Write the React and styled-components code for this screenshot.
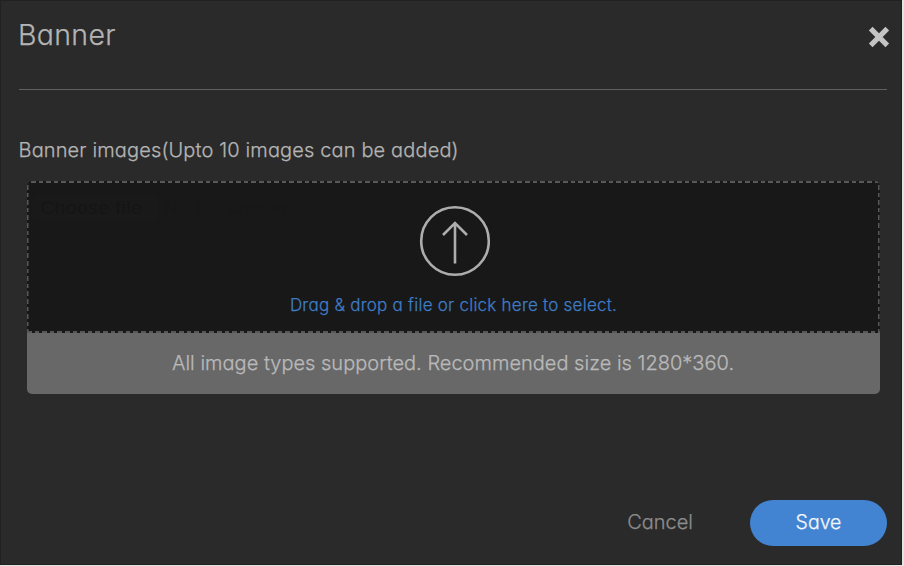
import React from "react";
import styled, { createGlobalStyle } from "styled-components";

const GlobalStyle = createGlobalStyle`
  * { box-sizing: border-box; }
  body {
    margin: 0;
    background: #e4e4e4;
    font-family: Inter, Lato, "Open Sans", sans-serif;
    font-feature-settings: "cv11", "ss03";
    font-weight: 300;
    -webkit-text-stroke: 0.25px currentColor;
  }
`;

const Modal = styled.main`
  width: 902px;
  height: 565px;
  padding: 0 14px 18px 18px;
  display: flex;
  flex-direction: column;
  background: #2a2a2a;
  border: 1px solid #212121;
  overflow: hidden;
`;

const Header = styled.header`
  height: 89px;
  flex: none;
  display: flex;
  justify-content: space-between;
  border-bottom: 1px solid #606060;
`;

const Title = styled.h1`
  margin: 16px 0 0 -1px;
  font-size: 28.5px;
  line-height: 36px;
  font-weight: 300;
  letter-spacing: 0.3px;
  color: #b4b4b4;
`;

const CloseButton = styled.button`
  width: 22px;
  height: 22px;
  margin: 25px -3px 0 0;
  padding: 0;
  border: 0;
  background: none;
  color: #c4c4c4;
  svg { display: block; }
`;

const Label = styled.label`
  margin: 47px 0 0 -0.5px;
  font-size: 20px;
  line-height: 26px;
  letter-spacing: 0.14px;
  white-space: nowrap;
  color: #b4b4b4;
`;

const Uploader = styled.section`
  width: 853px;
  margin: 18px 0 0 7.5px;
  border-radius: 5px;
  overflow: hidden;
`;

const dashesX = "repeating-linear-gradient(90deg, #585858 0 4.6px, transparent 4.6px 7.6px)";
const dashesY = "repeating-linear-gradient(180deg, #585858 0 4.6px, transparent 4.6px 7.6px)";

const DropZone = styled.div`
  position: relative;
  height: 152px;
  padding: 23px 0 0 2px;
  display: flex;
  flex-direction: column;
  align-items: center;
  border-radius: 5px 5px 0 0;
  background:
    ${dashesX} 4px 0 / 100% 2px no-repeat,
    ${dashesX} 0 100% / 100% 2px no-repeat,
    ${dashesY} 0 4px / 1.5px 100% no-repeat,
    ${dashesY} 100% 4px / 1.5px 100% no-repeat,
    #181818;
`;

const FileInput = styled.div`
  position: absolute;
  left: 6px;
  top: 13px;
  display: flex;
  align-items: center;
  gap: 7px;
  font: 19px/27px "Liberation Sans", sans-serif;
  letter-spacing: 0.6px;
  color: #171717;
  -webkit-text-stroke: 0;
`;

const FileButton = styled.span`
  width: 125px;
  padding-left: 8px;
  border-radius: 4px;
  background: #191919;
  color: #151515;
`;

const UploadIcon = styled.svg`
  position: relative;
  top: 0.5px;
  left: 0.5px;
`;

const Prompt = styled.p`
  margin: 17px 0 0 -1px;
  font-size: 17px;
  line-height: 24px;
  letter-spacing: 0.24px;
  white-space: nowrap;
  color: #3f7dc7;
`;

const Hint = styled.p`
  height: 61px;
  margin: 0;
  text-align: center;
  font-size: 20px;
  line-height: 60px;
  letter-spacing: 0.01px;
  white-space: nowrap;
  background: #686868;
  color: #b9b9b9;
`;

const Footer = styled.footer`
  margin-top: auto;
  display: flex;
  justify-content: flex-end;
  align-items: center;
  gap: 57px;
`;

const Button = styled.button`
  width: ${(p) => (p.$primary ? "137px" : "auto")};
  height: 46px;
  padding: 0 0 2px;
  border: 0;
  border-radius: 23px;
  background: ${(p) => (p.$primary ? "#4284d2" : "transparent")};
  color: ${(p) => (p.$primary ? "#f4f6fa" : "#8c8c8c")};
  font: inherit;
  font-feature-settings: inherit;
  font-size: ${(p) => (p.$primary ? "19.5px" : "20px")};
`;

export default function App() {
  return (
    <>
      <GlobalStyle />
      <Modal>
        <Header>
          <Title>Banner</Title>
          <CloseButton aria-label="Close">
            <svg width="22" height="22" viewBox="0 0 22 22" stroke="currentColor" strokeWidth="5.2">
              <path d="M2.7 2.7 19.3 19.3M19.3 2.7 2.7 19.3" />
            </svg>
          </CloseButton>
        </Header>
        <Label>Banner images(Upto 10 images can be added)</Label>
        <Uploader>
          <DropZone>
            <FileInput>
              <FileButton>Choose file</FileButton>
              <span>No file chosen</span>
            </FileInput>
            <UploadIcon width="72" height="72" viewBox="0 0 72 72" fill="none" stroke="#adadad" strokeWidth="2.6">
              <circle cx="36" cy="36" r="33.8" />
              <path d="M36 58.5V18M24 30 36 18 48 30" />
            </UploadIcon>
            <Prompt>Drag &amp; drop a file or click here to select.</Prompt>
          </DropZone>
          <Hint>All image types supported. Recommended size is 1280*360.</Hint>
        </Uploader>
        <Footer>
          <Button>Cancel</Button>
          <Button $primary>Save</Button>
        </Footer>
      </Modal>
    </>
  );
}
